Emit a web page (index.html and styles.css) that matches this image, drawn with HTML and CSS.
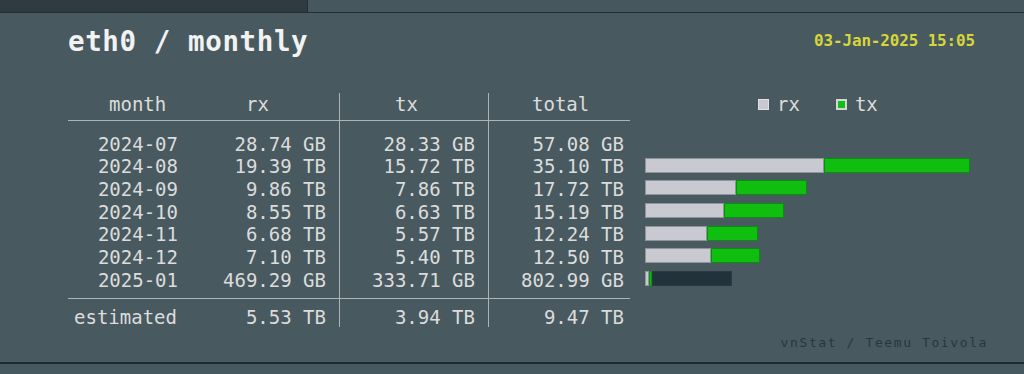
FILE: index.html
```html
<!DOCTYPE html>
<html>
<head>
<meta charset="utf-8">
<link rel="stylesheet" href="styles.css">
</head>
<body>
<div class="topbar"><div class="tab"></div><div class="tabrest"></div></div>
<div class="panel">
  <div class="head">
    <div class="title">eth0 / monthly</div>
    <div class="date">03-Jan-2025 15:05</div>
  </div>
  <div class="table">
    <div class="col c1">
      <div class="hd">month</div>
      <div class="body">
        <div class="row">2024-07</div>
        <div class="row">2024-08</div>
        <div class="row">2024-09</div>
        <div class="row">2024-10</div>
        <div class="row">2024-11</div>
        <div class="row">2024-12</div>
        <div class="row">2025-01</div>
      </div>
      <div class="est">estimated</div>
    </div>
    <div class="col c2">
      <div class="hd">rx</div>
      <div class="body">
        <div class="row">28.74 GB</div>
        <div class="row">19.39 TB</div>
        <div class="row">9.86 TB</div>
        <div class="row">8.55 TB</div>
        <div class="row">6.68 TB</div>
        <div class="row">7.10 TB</div>
        <div class="row">469.29 GB</div>
      </div>
      <div class="est">5.53 TB</div>
    </div>
    <div class="col c3">
      <div class="hd">tx</div>
      <div class="body">
        <div class="row">28.33 GB</div>
        <div class="row">15.72 TB</div>
        <div class="row">7.86 TB</div>
        <div class="row">6.63 TB</div>
        <div class="row">5.57 TB</div>
        <div class="row">5.40 TB</div>
        <div class="row">333.71 GB</div>
      </div>
      <div class="est">3.94 TB</div>
    </div>
    <div class="col c4">
      <div class="hd">total</div>
      <div class="body">
        <div class="row">57.08 GB</div>
        <div class="row">35.10 TB</div>
        <div class="row">17.72 TB</div>
        <div class="row">15.19 TB</div>
        <div class="row">12.24 TB</div>
        <div class="row">12.50 TB</div>
        <div class="row">802.99 GB</div>
      </div>
      <div class="est">9.47 TB</div>
    </div>
    <div class="bars">
      <div class="legend">
        <span class="box box-rx"></span><span class="lg-label">rx</span>
        <span class="box box-tx"></span><span class="lg-label">tx</span>
      </div>
      <div class="barbody">
        <div class="barrow"></div>
        <div class="barrow"><div class="bar"><span class="seg rx" style="width:179px"></span><span class="seg tx" style="width:146px"></span></div></div>
        <div class="barrow"><div class="bar"><span class="seg rx" style="width:91px"></span><span class="seg tx" style="width:71px"></span></div></div>
        <div class="barrow"><div class="bar"><span class="seg rx" style="width:79px"></span><span class="seg tx" style="width:60px"></span></div></div>
        <div class="barrow"><div class="bar"><span class="seg rx" style="width:62px"></span><span class="seg tx" style="width:51px"></span></div></div>
        <div class="barrow"><div class="bar"><span class="seg rx" style="width:66px"></span><span class="seg tx" style="width:49px"></span></div></div>
        <div class="barrow"><div class="bar"><span class="seg rx" style="width:4px"></span><span class="seg tx" style="width:3px"></span><span class="seg estbar" style="width:80px"></span></div></div>
      </div>
    </div>
  </div>
  <div class="foot">vnStat / Teemu Toivola</div>
</div>
<div class="bottomrule"></div>
</body>
</html>
```

FILE: styles.css
```css
html, body {
  margin: 0;
  padding: 0;
  background: #475960;
  width: 1024px;
  height: 374px;
  overflow: hidden;
}
body {
  font-family: "DejaVu Sans Mono", "Liberation Mono", monospace;
  color: #dcdcdc;
}
.topbar {
  display: flex;
  height: 12px;
  border-bottom: 1px solid #232e33;
}
.tab {
  width: 307px;
  background: #2f3b41;
  border-right: 1px solid #232e33;
}
.tabrest {
  flex: 1;
  background: #46585e;
}
.panel {
  height: 349px;
  box-sizing: border-box;
  padding: 14px 36px 0 68px;
  background: #485a60;
}
.head {
  display: flex;
  justify-content: space-between;
  align-items: center;
  padding-right: 13px;
}
.title {
  font-size: 27.5px;
  font-weight: bold;
  line-height: 28px;
  color: #f2f2f2;
  letter-spacing: 0.6px;
}
.date {
  font-size: 15.9px;
  font-weight: bold;
  color: #d6d63a;
  line-height: 20px;
  letter-spacing: -0.1px;
}
.table {
  display: flex;
  margin-top: 38px;
  font-size: 19px;
}
.col {
  display: flex;
  flex-direction: column;
  box-sizing: border-box;
  text-align: right;
  white-space: nowrap;
}
.hd {
  height: 28px;
  box-sizing: border-box;
  padding-top: 1px;
  line-height: 20px;
  border-bottom: 1px solid #aeb4b6;
  text-align: left;
}
.body {
  padding: 11.5px 0 6.6px;
}
.row {
  height: 22.7px;
  line-height: 22.7px;
}
.est {
  height: 29px;
  box-sizing: border-box;
  border-top: 1px solid #aeb4b6;
  padding-top: 9px;
  line-height: 18px;
}
.c1 { width: 132px; }
.c1 .row { padding-right: 22px; }
.c1 .hd { padding-left: 41px; }
.c1 .est { text-align: left; padding-left: 6px; }
.c2 { width: 139px; }
.c2 .row, .c2 .est { padding-right: 13px; }
.c2 .hd { padding-left: 46px; }
.c3 { width: 149px; border-left: 1px solid #aeb4b6; }
.c3 .row, .c3 .est { padding-right: 13px; }
.c3 .hd { padding-left: 55px; }
.c4 { width: 142px; border-left: 1px solid #aeb4b6; }
.c4 .row, .c4 .est { padding-right: 6px; }
.c4 .hd { padding-left: 43px; }
.bars {
  display: flex;
  flex-direction: column;
  padding-left: 15px;
}
.legend {
  display: flex;
  align-items: center;
  align-self: flex-start;
  height: 20px;
  line-height: 20px;
  margin-top: 1px;
  margin-bottom: 8px;
  padding-left: 113px;
}
.box {
  width: 11px;
  height: 11px;
  box-sizing: border-box;
  display: inline-block;
}
.box-rx {
  background: #c8c8d0;
  border: 1px solid #e0e0e6;
}
.box-tx {
  background: #12bf12;
  border: 2px solid #d4d8d4;
  margin-left: 36px;
}
.lg-label {
  margin-left: 8px;
}
.barbody {
  padding-top: 9.5px;
}
.barrow {
  height: 22.7px;
  display: flex;
  align-items: center;
}
.bar {
  display: flex;
  height: 15px;
  margin-top: -1px;
}
.seg {
  display: block;
  height: 15px;
  box-sizing: border-box;
}
.seg.rx {
  background: #c9c9d1;
  border: 1px solid #8e9498;
}
.seg.tx {
  background: #10be10;
  border: 1px solid #0b8d12;
}
.seg.estbar {
  background: #21323a;
  border: 1px solid #2a3a40;
}
.foot {
  margin-top: 8px;
  text-align: right;
  font-size: 13px;
  line-height: 16px;
  letter-spacing: 1.6px;
  color: #2a363b;
}
.bottomrule {
  height: 11px;
  border-top: 2px solid #1f2a2f;
  background: #465960;
}
```
